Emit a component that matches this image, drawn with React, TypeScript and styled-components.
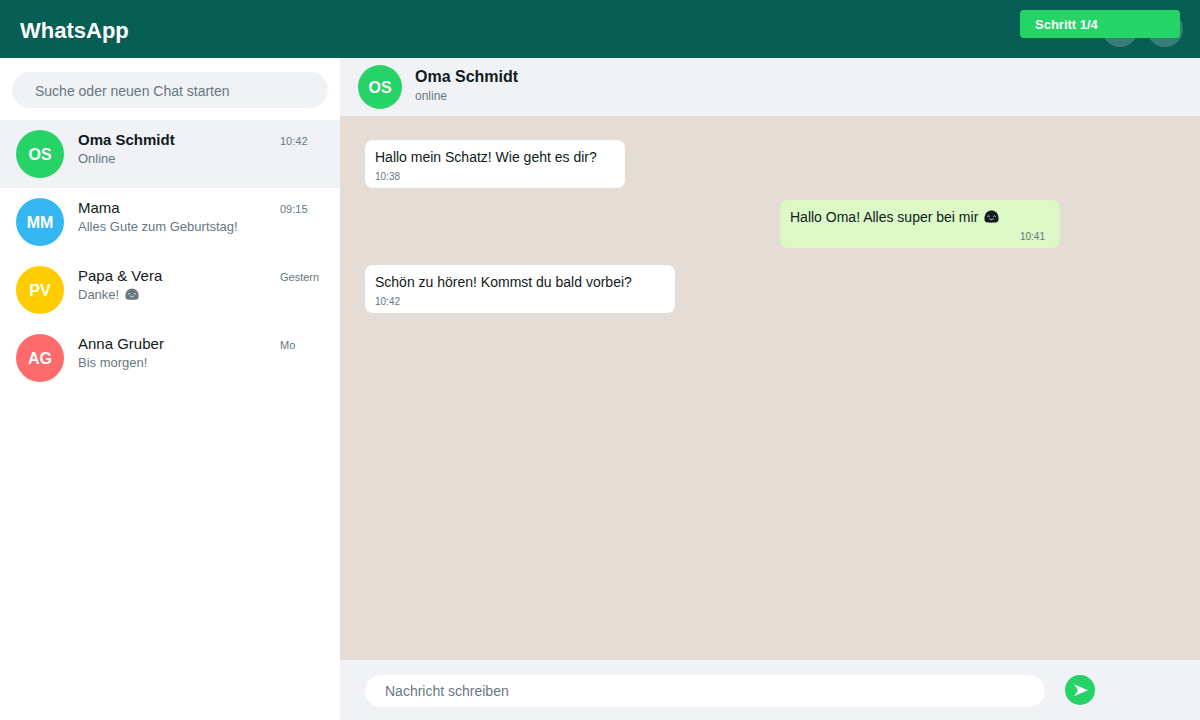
import React from "react";
import styled, { createGlobalStyle } from "styled-components";

const color = {
  brand: "#075e54",
  accent: "#25d366",
  panel: "#f0f2f5",
  canvas: "#e5ddd5",
  outgoing: "#dcf8c6",
  text: "#111b21",
  muted: "#667781",
};

const GlobalStyle = createGlobalStyle`
  *, *::before, *::after { box-sizing: border-box; }
  body {
    margin: 0;
    font-family: "Liberation Sans", Arial, Helvetica, sans-serif;
    color: ${color.text};
    background: #ffffff;
  }
  button, input { font-family: inherit; border: 0; padding: 0; margin: 0; }
  input::placeholder { color: ${color.muted}; opacity: 1; }
`;

const Page = styled.div`
  display: flex;
  flex-direction: column;
  min-height: 100vh;
`;

const TopBar = styled.header`
  position: relative;
  display: flex;
  align-items: center;
  justify-content: space-between;
  height: 58px;
  padding: 0 17px 0 20px;
  background: ${color.brand};
`;

const Brand = styled.h1`
  margin: 0;
  padding-top: 4px;
  font-size: 22px;
  line-height: 26px;
  color: #ffffff;
`;

const Actions = styled.div`
  display: flex;
  gap: 9px;
`;

const ActionButton = styled.button`
  width: 36px;
  height: 36px;
  border-radius: 50%;
  background: rgba(255, 255, 255, 0.2);
`;

const StepBadge = styled.div`
  position: absolute;
  top: 10px;
  right: 20px;
  width: 160px;
  height: 28px;
  padding-left: 15px;
  border-radius: 4px;
  background: ${color.accent};
  color: #ffffff;
  font-size: 13px;
  font-weight: bold;
  line-height: 29px;
`;

const Columns = styled.div`
  display: flex;
  flex: 1;
`;

const Sidebar = styled.aside`
  flex: 0 0 340px;
  background: #ffffff;
`;

const SearchForm = styled.form`
  padding: 14px 12px 12px;
`;

const SearchInput = styled.input`
  display: block;
  width: 100%;
  height: 36px;
  padding: 2px 23px 0;
  border-radius: 18px;
  background: ${color.panel};
  color: ${color.text};
  font-size: 14px;
`;

const ChatList = styled.ul`
  margin: 0;
  padding: 0;
  list-style: none;
`;

const ChatRow = styled.button<{ $active: boolean }>`
  display: grid;
  grid-template-columns: 48px 1fr 60px;
  column-gap: 14px;
  align-items: start;
  width: 100%;
  height: 68px;
  padding: 10px 0 10px 16px;
  text-align: left;
  color: ${color.text};
  background: ${(p) => (p.$active ? color.panel : "#ffffff")};
`;

const Avatar = styled.span<{ $size: number; $color: string }>`
  flex-shrink: 0;
  width: ${(p) => p.$size}px;
  height: ${(p) => p.$size}px;
  border-radius: 50%;
  background: ${(p) => p.$color};
  color: #ffffff;
  font-size: 16px;
  font-weight: bold;
  line-height: ${(p) => p.$size + 1}px;
  text-align: center;
`;

const ChatSummary = styled.span`
  display: flex;
  flex-direction: column;
  white-space: nowrap;
`;

const ChatName = styled.span<{ $active: boolean }>`
  font-size: 15px;
  font-weight: ${(p) => (p.$active ? "bold" : "normal")};
  line-height: 20px;
`;

const ChatPreview = styled.span`
  font-size: 13px;
  line-height: 18px;
  color: ${color.muted};
`;

const ChatTime = styled.time`
  padding-top: 2px;
  font-size: 11px;
  line-height: 18px;
  color: ${color.muted};
`;

const Conversation = styled.main`
  display: flex;
  flex: 1;
  flex-direction: column;
  min-width: 0;
`;

const ContactBar = styled.div`
  display: flex;
  align-items: center;
  gap: 13px;
  height: 58px;
  padding: 0 18px;
  background: ${color.panel};
`;

const ContactName = styled.h2`
  margin: 0;
  font-size: 16px;
  line-height: 20px;
`;

const ContactStatus = styled.p`
  margin: 0;
  padding-bottom: 3px;
  font-size: 12px;
  line-height: 18px;
  color: ${color.muted};
`;

const Messages = styled.div`
  display: flex;
  flex: 1;
  flex-direction: column;
  align-items: flex-start;
  padding: 24px 140px 24px 25px;
  background: ${color.canvas};
`;

const Bubble = styled.article<{ $own: boolean; $width: number }>`
  align-self: ${(p) => (p.$own ? "flex-end" : "flex-start")};
  width: ${(p) => p.$width}px;
  max-width: 100%;
  margin-bottom: ${(p) => (p.$own ? 17 : 12)}px;
  padding: 8px ${(p) => (p.$own ? 15 : 10)}px 2px 10px;
  border-radius: 8px;
  background: ${(p) => (p.$own ? color.outgoing : "#ffffff")};
  text-align: ${(p) => (p.$own ? "right" : "left")};
`;

const BubbleText = styled.p`
  margin: 0;
  font-size: 14px;
  line-height: 18px;
  text-align: left;
`;

const BubbleTime = styled.time`
  display: block;
  padding-top: 2px;
  font-size: 10px;
  line-height: 18px;
  color: ${color.muted};
`;

const Composer = styled.form`
  display: flex;
  align-items: flex-start;
  gap: 20px;
  height: 60px;
  padding: 15px 105px 0 25px;
  background: ${color.panel};
`;

const MessageInput = styled.input`
  flex: 1;
  min-width: 0;
  height: 32px;
  padding: 0 20px 1px;
  border-radius: 16px;
  background: #ffffff;
  color: ${color.text};
  font-size: 14px;
`;

const SendButton = styled.button`
  width: 30px;
  height: 30px;
  border-radius: 50%;
  background: ${color.accent};
`;

const SmileyIcon = styled.svg<{ $size: number }>`
  width: ${(p) => p.$size}px;
  height: ${(p) => p.$size}px;
  margin-left: 2px;
  vertical-align: -2px;
`;

function Smiley({ size, face }: { size: number; face: string }) {
  return (
    <SmileyIcon $size={size} viewBox="0 0 14 14" role="img" aria-label="Lächeln">
      <path
        d="M7 1.4C10.3 1.4 12.6 3.5 13.3 6.6C13.8 9 13.7 11.1 12.7 12C11.8 12.8 9.6 12.8 7 12.8S2.2 12.8 1.3 12C.3 11.1 .2 9 .7 6.6C1.4 3.5 3.7 1.4 7 1.4Z"
        fill="currentColor"
      />
      <path
        d="M3.2 6.9Q4.2 5.8 5.2 6.7M8.8 6.7Q9.8 5.8 10.8 6.9M5.2 9.2Q7 11 8.8 9.2"
        fill="none"
        stroke={face}
        strokeWidth="0.7"
        strokeLinecap="round"
      />
    </SmileyIcon>
  );
}

const chats = [
  { initials: "OS", name: "Oma Schmidt", preview: "Online", time: "10:42", color: "#25d366", active: true, smiley: false },
  { initials: "MM", name: "Mama", preview: "Alles Gute zum Geburtstag!", time: "09:15", color: "#34b7f1", active: false, smiley: false },
  { initials: "PV", name: "Papa & Vera", preview: "Danke!", time: "Gestern", color: "#ffcc00", active: false, smiley: true },
  { initials: "AG", name: "Anna Gruber", preview: "Bis morgen!", time: "Mo", color: "#ff6b6b", active: false, smiley: false },
];

const messages = [
  { text: "Hallo mein Schatz! Wie geht es dir?", time: "10:38", own: false, width: 260, smiley: false },
  { text: "Hallo Oma! Alles super bei mir", time: "10:41", own: true, width: 280, smiley: true },
  { text: "Schön zu hören! Kommst du bald vorbei?", time: "10:42", own: false, width: 310, smiley: false },
];

export default function App() {
  return (
    <>
      <GlobalStyle />
      <Page>
        <TopBar>
          <Brand>WhatsApp</Brand>
          <Actions>
            <ActionButton type="button" aria-label="Status" />
            <ActionButton type="button" aria-label="Menü" />
          </Actions>
          <StepBadge role="status">Schritt 1/4</StepBadge>
        </TopBar>
        <Columns>
          <Sidebar>
            <SearchForm role="search" onSubmit={(e) => e.preventDefault()}>
              <SearchInput
                type="text"
                aria-label="Suche oder neuen Chat starten"
                placeholder="Suche oder neuen Chat starten"
              />
            </SearchForm>
            <ChatList>
              {chats.map((chat) => (
                <li key={chat.name}>
                  <ChatRow type="button" $active={chat.active}>
                    <Avatar $size={48} $color={chat.color}>{chat.initials}</Avatar>
                    <ChatSummary>
                      <ChatName $active={chat.active}>{chat.name}</ChatName>
                      <ChatPreview>
                        {chat.preview}
                        {chat.smiley && <> <Smiley size={14} face="#ffffff" /></>}
                      </ChatPreview>
                    </ChatSummary>
                    <ChatTime>{chat.time}</ChatTime>
                  </ChatRow>
                </li>
              ))}
            </ChatList>
          </Sidebar>
          <Conversation>
            <ContactBar>
              <Avatar $size={44} $color={color.accent}>OS</Avatar>
              <div>
                <ContactName>Oma Schmidt</ContactName>
                <ContactStatus>online</ContactStatus>
              </div>
            </ContactBar>
            <Messages>
              {messages.map((message) => (
                <Bubble key={message.time} $own={message.own} $width={message.width}>
                  <BubbleText>
                    {message.text}
                    {message.smiley && <> <Smiley size={15} face={color.outgoing} /></>}
                  </BubbleText>
                  <BubbleTime>{message.time}</BubbleTime>
                </Bubble>
              ))}
            </Messages>
            <Composer onSubmit={(e) => e.preventDefault()}>
              <MessageInput type="text" aria-label="Nachricht schreiben" placeholder="Nachricht schreiben" />
              <SendButton type="submit" aria-label="Senden">
                <svg width="30" height="30" viewBox="0 0 30 30" display="block" aria-hidden="true">
                  <path d="M8.8 9.2L23 15.3L8.8 21.2C10.8 19.2 12.2 17.2 12.7 15.3C12.2 13.2 10.8 11.2 8.8 9.2Z" fill="#ffffff" />
                </svg>
              </SendButton>
            </Composer>
          </Conversation>
        </Columns>
      </Page>
    </>
  );
}
